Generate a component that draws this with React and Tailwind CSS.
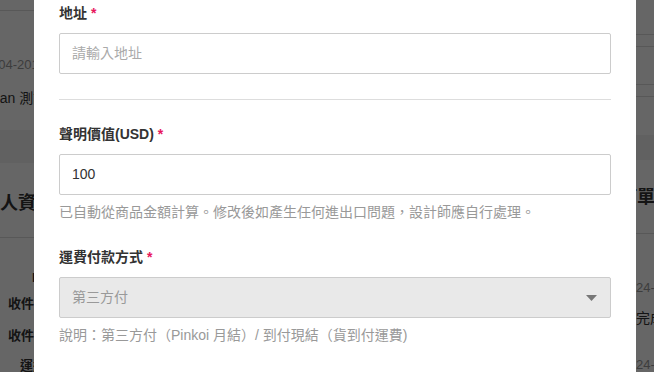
import React from "react";

const font = { fontFamily: '"Liberation Sans", "Noto Sans CJK TC", sans-serif' };

function Label({ children }) {
  return (
    <div className="h-[20px] leading-[20px] text-[14px] font-bold text-[#333] mb-[10px]">
      {children} <span className="text-[#e8175d]">*</span>
    </div>
  );
}

function Helper({ children }) {
  return (
    <div className="mt-[7px] h-[20px] leading-[20px] text-[14px] text-[#999] whitespace-nowrap">
      {children}
    </div>
  );
}

export default function App() {
  return (
    <div className="relative w-full h-[372px] overflow-hidden bg-white" style={font}>
      {/* underlying page */}
      <div className="flex h-full w-full justify-between">
        {/* left column */}
        <div className="w-[40px] overflow-hidden flex flex-col">
          <div className="h-[11px] border-b border-[#dddddd] w-full shrink-0" />
          <div className="mt-[44px] h-[20px] leading-[20px] text-[13px] text-[#999] whitespace-nowrap -ml-[35px]">
            2024-04-2010:00
          </div>
          <div className="mt-[13px] h-[20px] leading-[20px] text-[14px] text-[#333] whitespace-nowrap -ml-[15px]">
            Jean 測試帳號
          </div>
          <div className="mt-[22px] h-[33px] bg-[#f3f3f3] shrink-0" />
          <div className="mt-[27px] h-[26px] leading-[26px] text-[18px] font-bold text-[#333] whitespace-nowrap -ml-[36px]">
            收件人資訊
          </div>
          <div className="mt-[21px] border-b border-[#dddddd]" />
          <div className="mt-[30px] h-[20px] leading-[20px] text-[13px] font-bold text-[#333] whitespace-nowrap ml-[32px]">
            ID
          </div>
          <div className="mt-[6px] h-[20px] leading-[20px] text-[13px] font-bold text-[#333] whitespace-nowrap ml-[8px]">
            收件人姓名
          </div>
          <div className="mt-[12px] h-[20px] leading-[20px] text-[13px] font-bold text-[#333] whitespace-nowrap ml-[8px]">
            收件人電話
          </div>
          <div className="mt-[10px] h-[20px] leading-[20px] text-[13px] font-bold text-[#333] whitespace-nowrap ml-[20px]">
            運送方式
          </div>
        </div>
        {/* right column */}
        <div className="w-[18px] overflow-hidden flex flex-col">
          <div className="h-[35px] border-b border-[#dddddd] shrink-0" />
          <div className="h-[12px] border-b border-[#dddddd] shrink-0" />
          <div className="h-[38px] border-b border-[#dddddd] shrink-0" />
          <div className="h-[12px] border-b border-[#dddddd] shrink-0" />
          <div className="h-[38px] shrink-0" />
          <div className="h-[25px] bg-[#f3f3f3] shrink-0" />
          <div className="mt-[24px] h-[26px] leading-[26px] text-[18px] font-bold text-[#333] whitespace-nowrap -ml-[17px]">
            訂單資訊
          </div>
          <div className="mt-[23px] border-b border-[#dddddd]" />
          <div className="mt-[44px] h-[20px] leading-[20px] text-[13px] text-[#999] whitespace-nowrap">
            24-04-20
          </div>
          <div className="mt-[10px] h-[20px] leading-[20px] text-[14px] text-[#333] whitespace-nowrap">
            完成
          </div>
          <div className="mt-[27px] h-[20px] leading-[20px] text-[13px] text-[#999] whitespace-nowrap">
            24-04-20
          </div>
        </div>
      </div>

      {/* overlay */}
      <div className="absolute inset-0 bg-black/60" />

      {/* modal */}
      <div className="absolute left-[34px] top-0 w-[602px] h-[400px] bg-white px-[25px] pt-[3px]">
        <Label>地址</Label>
        <div className="h-[41px] border border-[#cccccc] rounded-[2px] px-[12px] flex items-center text-[14px] text-[#aaa]">
          請輸入地址
        </div>
        <div className="mt-[25px] border-t border-[#dddddd]" />
        <div className="pt-[24px]">
          <Label>聲明價值(USD)</Label>
          <div className="h-[41px] border border-[#cccccc] rounded-[2px] px-[12px] flex items-center text-[14px] text-[#333]">
            100
          </div>
          <Helper>已自動從商品金額計算。修改後如產生任何進出口問題，設計師應自行處理。</Helper>
        </div>
        <div className="mt-[25px]">
          <Label>運費付款方式</Label>
          <div className="h-[41px] border border-[#cccccc] rounded-[2px] bg-[#e9e9e9] pl-[12px] pr-[13px] flex items-center justify-between text-[14px] text-[#999]">
            <span>第三方付</span>
            <svg width="11" height="6" viewBox="0 0 11 6">
              <polygon points="0,0 11,0 5.5,6" fill="#777" />
            </svg>
          </div>
          <Helper>說明：第三方付（Pinkoi 月結）/ 到付現結（貨到付運費)</Helper>
        </div>
      </div>
    </div>
  );
}
